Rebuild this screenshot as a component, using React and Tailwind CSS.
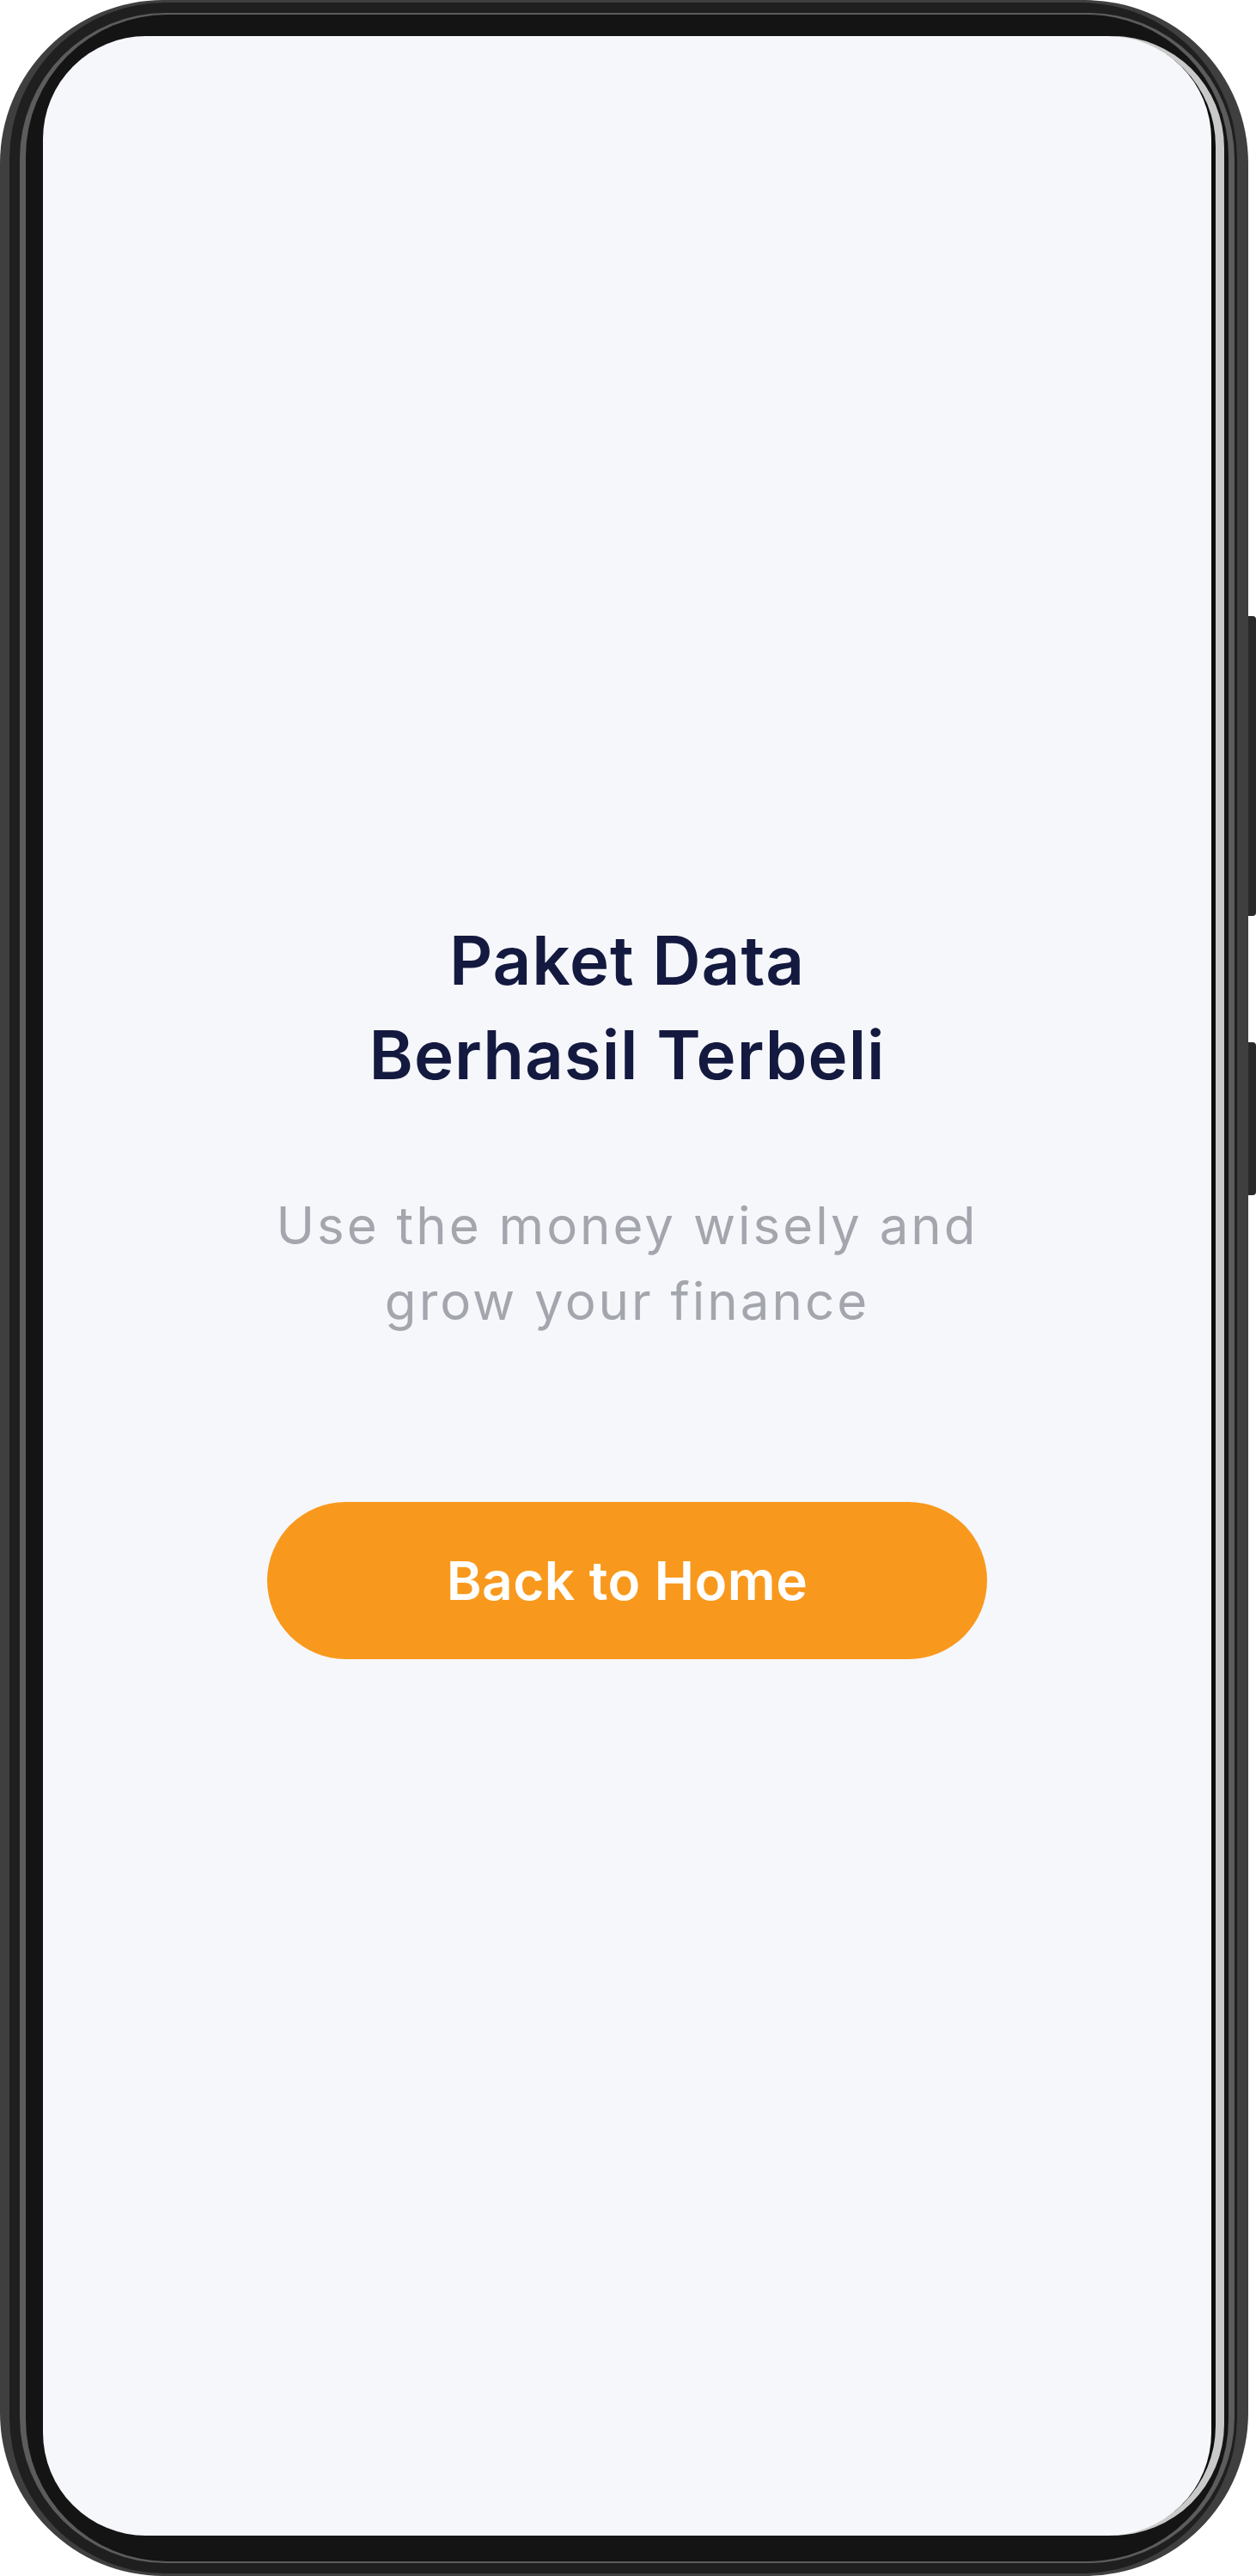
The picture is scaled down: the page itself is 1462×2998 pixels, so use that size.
export default function App() {
  return (
    <div className="flex w-[1462px] h-[2998px] bg-white" style={{ fontFamily: "Inter, 'Noto Sans', sans-serif" }}>
      {/* phone body */}
      <div className="flex w-[1453px] h-full rounded-[190px] bg-[#3f3f3f] pl-[11px] pr-[13px] pt-[3px] pb-[3px]">
        <div className="flex flex-1 rounded-[182px] bg-[#1f1f1f] pl-[12px] pr-[3px] pt-[12px] pb-[12px]">
          <div className="flex flex-1 rounded-[170px] bg-[#5c5c5c] px-[7px] py-[2px]">
            <div className="flex flex-1 rounded-[165px] bg-[#141414] pl-[20px] pr-[5px] pt-[25px] pb-[30px]">
              <div className="flex flex-1 rounded-[130px] bg-[#c9c9c9] pr-[10px]">
                <div className="flex flex-1 rounded-[128px] bg-[#0d0d0d] pr-[5px]">
                  {/* screen */}
                  <div className="flex flex-1 flex-col items-center justify-center rounded-[120px] bg-[#f6f7fb]">
                    <h1 className="text-center text-[78px] leading-[110px] font-semibold tracking-[1px] text-[#14193f]">
                      Paket Data
                      <br />
                      Berhasil Terbeli
                    </h1>
                    <p className="mt-[99px] text-center text-[60px] leading-[88px] font-normal tracking-[3px] text-[#a4a6ad]">
                      Use the money wisely and
                      <br />
                      grow your finance
                    </p>
                    <button className="mt-[190px] flex h-[183px] w-[838px] items-center justify-center rounded-full bg-[#f8991d] text-[62px] font-semibold tracking-[0.5px] text-white">
                      Back to Home
                    </button>
                  </div>
                </div>
              </div>
            </div>
          </div>
        </div>
      </div>
      {/* side buttons */}
      <div className="flex w-[9px] flex-col">
        <div className="mt-[717px] h-[349px] rounded-r-[4px] bg-[#2a2a2a]" />
        <div className="mt-[147px] h-[178px] rounded-r-[4px] bg-[#2a2a2a]" />
      </div>
    </div>
  )
}
